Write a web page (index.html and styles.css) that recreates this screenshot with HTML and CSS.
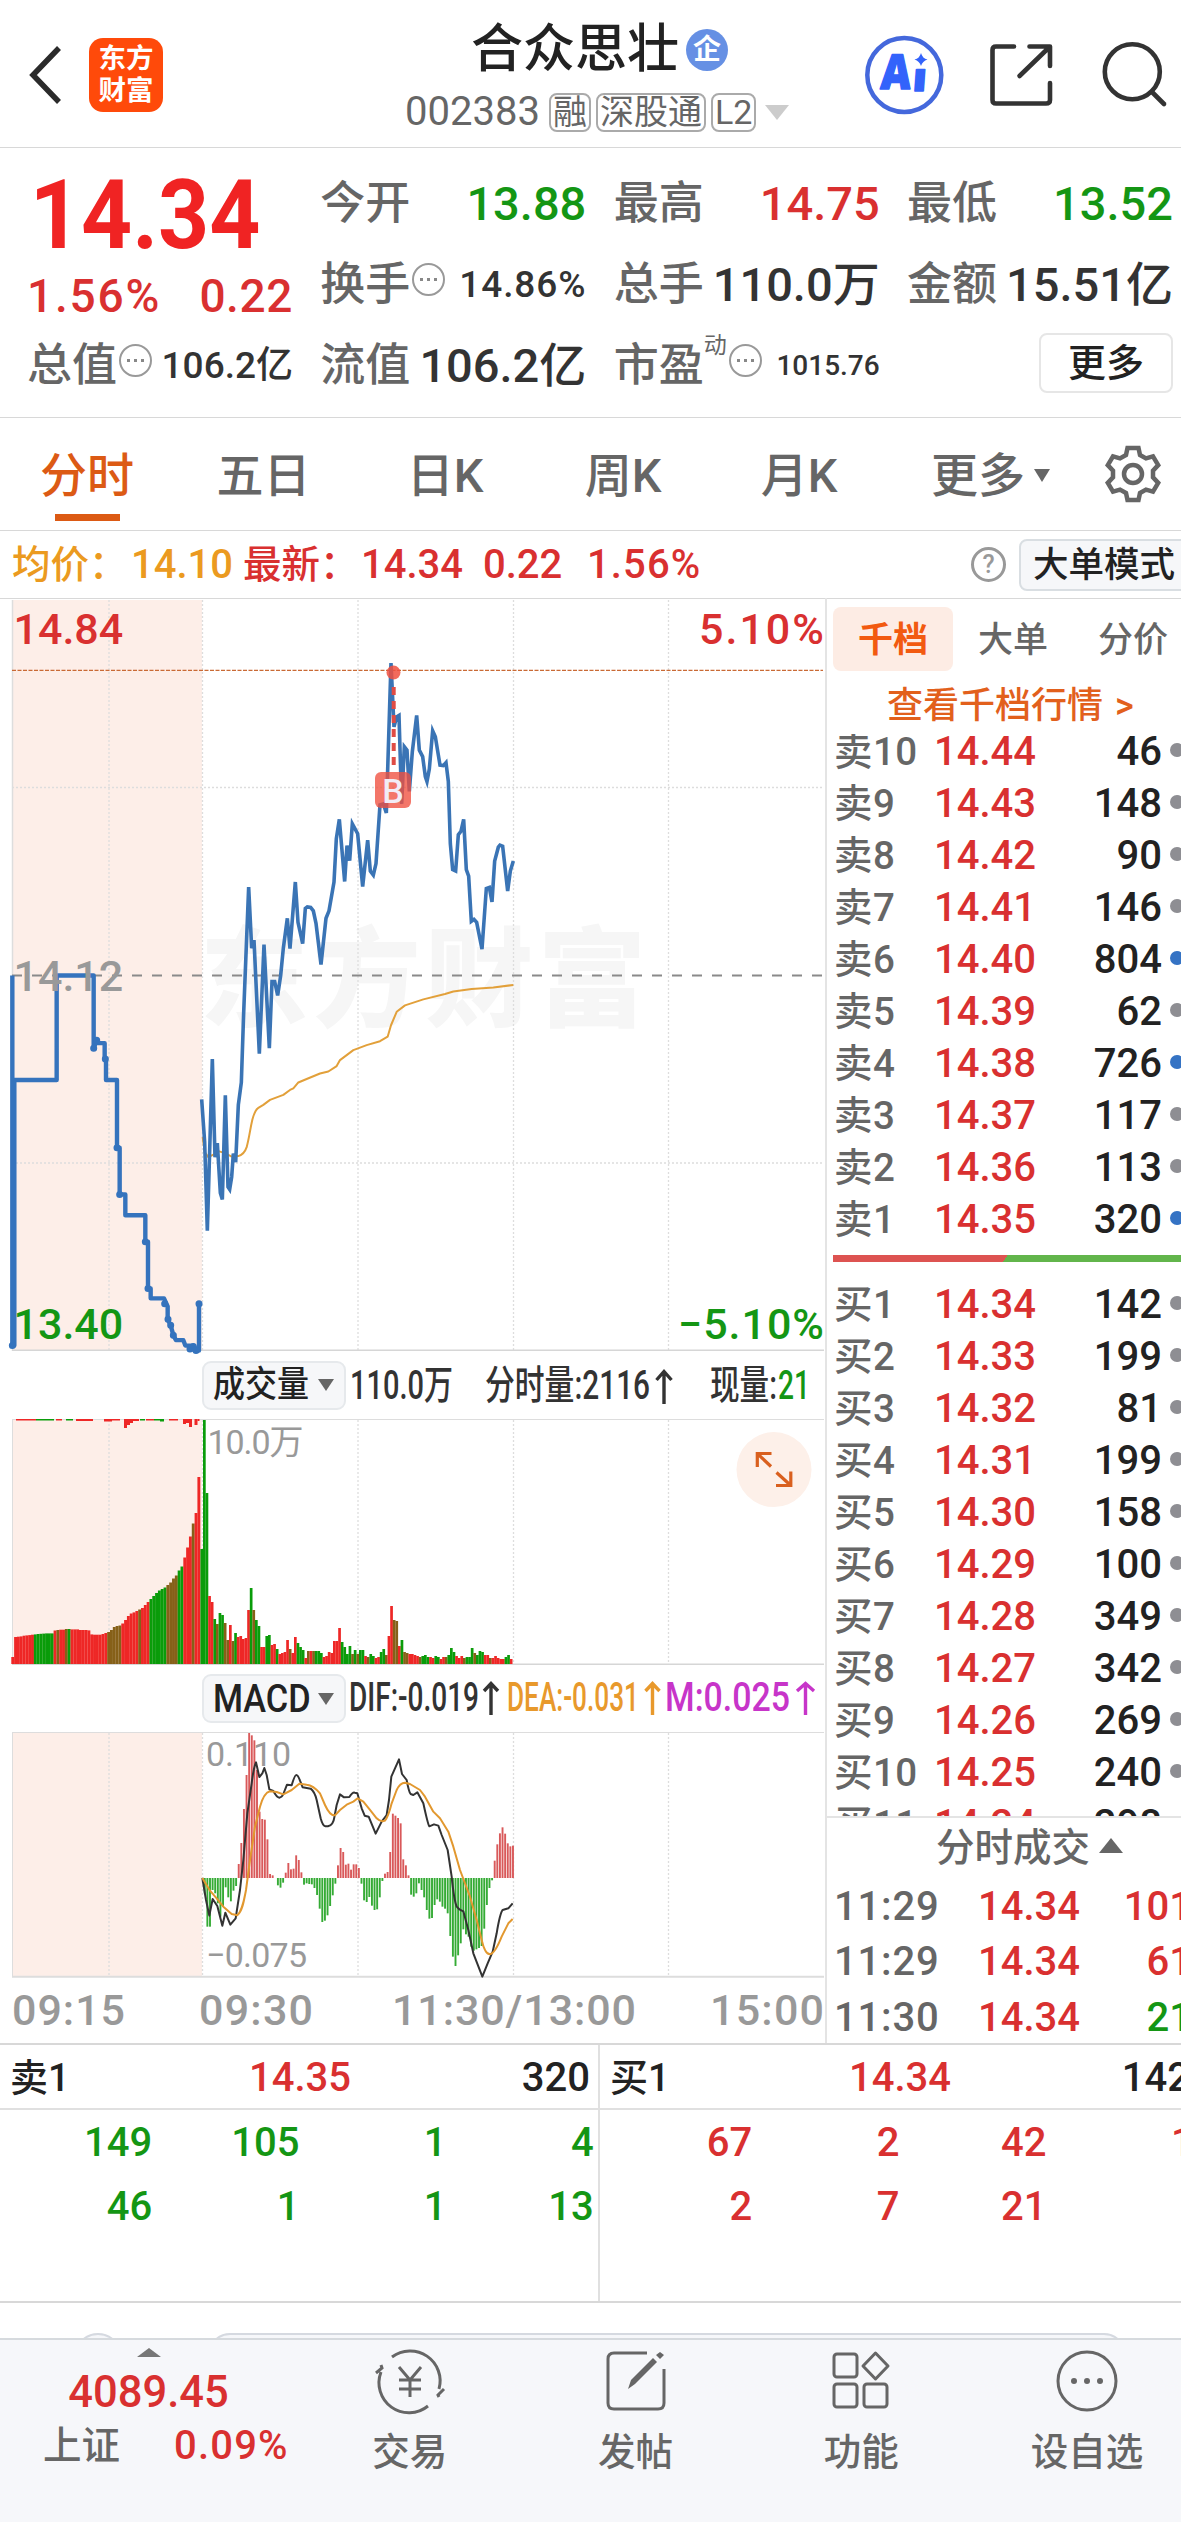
FILE: index.html
```html
<!DOCTYPE html>
<html lang="zh-CN">
<head>
<meta charset="utf-8">
<title>合众思壮 002383</title>
<link rel="stylesheet" href="styles.css">
</head>
<body>
<header class="topbar">
  <svg class="back" viewBox="0 0 34 62" width="34" height="62"><path d="M30 4 L4 31 L30 58"/></svg>
  <div class="logo"><span>东方</span><span>财富</span></div>
  <div class="title">
    <div class="name">合众思壮<span class="corp">企</span></div>
    <div class="code">002383<span class="tag">融</span><span class="tag">深股通</span><span class="tag">L2</span><i class="drop"></i></div>
  </div>
  <svg class="actions" viewBox="860 0 321 147" width="321" height="147">
    <circle cx="904.3" cy="75" r="37" fill="none" stroke="#4468dc" stroke-width="4.5"/>
    <g transform="translate(0 89) skewX(-4)" class="ai">
      <text x="880" y="0" font-size="48" textLength="30" lengthAdjust="spacingAndGlyphs">A</text>
      <text x="912" y="1.500" font-size="39" textLength="14" lengthAdjust="spacingAndGlyphs">ı</text>
    </g>
    <path d="M921 53 q1.5 5.5 6.500 6.500 q-5 1.500 -6.500 6.500 q-1.500 -5 -6.500 -6.500 q5 -1 6.500 -6.500Z" fill="#3363fb"/>
    <g class="ink">
      <path d="M1014 46.500 H996 Q992.500 46.500 992.500 50 V100 Q992.500 103.500 996 103.500 H1046 Q1050 103.500 1050 100 V83"/>
      <path d="M1029.500 46.500 H1050 V66 M1049 47.500 L1019.500 76"/>
      <circle cx="1132.300" cy="71.700" r="27.500"/>
      <path d="M1152 92 L1164 104"/>
    </g>
  </svg>
</header>

<section class="quote">
  <div class="last">
    <div class="big">14.34</div>
    <div class="chg"><span>1.56%</span><span>0.22</span></div>
  </div>
  <div class="cell"><span>今开</span><b class="g">13.88</b></div>
  <div class="cell"><span>最高</span><b class="r">14.75</b></div>
  <div class="cell"><span>最低</span><b class="g">13.52</b></div>
  <div class="cell"><span>换手</span><i class="info"></i><b class="mid wide">14.86%</b></div>
  <div class="cell"><span>总手</span><b>110.0万</b></div>
  <div class="cell"><span>金额</span><b>15.51亿</b></div>
  <div class="cell"><span>总值</span><i class="info"></i><b class="mid">106.2亿</b></div>
  <div class="cell"><span>流值</span><b>106.2亿</b></div>
  <div class="cell"><span>市盈</span><sup>动</sup><i class="info"></i><b class="small">1015.76</b></div>
  <div class="cell end"><span class="morebtn">更多</span></div>
</section>

<nav class="tabs">
  <span class="tab on">分时</span>
  <span class="tab">五日</span>
  <span class="tab">日K</span>
  <span class="tab">周K</span>
  <span class="tab">月K</span>
  <span class="tab more">更多<i></i></span>
  <svg viewBox="-30 -30 60 60" width="60" height="60"><path d="M-5.500-26H5.500L7-19 13-15.600 20-17.600 25.200-8.900 20-3.400V3.400L25.200 8.900 20 17.600 13 15.600 7 19 5.500 26H-5.500L-7 19-13 15.600-20 17.600-25.200 8.900-20 3.400V-3.400L-25.200-8.900-20-17.600-13-15.600-7-19Z"/><circle r="9"/></svg>
</nav>

<div class="summary">
  <span class="avg">均价<em>：</em></span><span class="avg n1">14.10</span>
  <span class="red l2">最新<em>：</em></span><span class="red n2">14.34</span><span class="red n3">0.22</span><span class="red n4">1.56%</span>
  <span class="help">?</span>
  <span class="mode">大单模式</span>
</div>

<main class="board">
  <div class="charts">
    <svg class="panel" viewBox="0 598 825 753" width="825" height="753">
      <rect x="12" y="600" width="190" height="751" fill="#fdeee8"/>
      <g class="wm"><text x="200" y="1018" textLength="446">东方财富</text></g>
      <path class="grid" d="M109 600V1351M202.500 600V1351M358 600V1351M513.500 600V1351M668.500 600V1351M12 787.500H823M12 1163H823"/>
      <path d="M12.500 600V1351" stroke="#ddd" stroke-width="1.500"/>
      <path d="M12 1350.300H824" stroke="#d6d6d6" stroke-width="1.500"/>
      <path d="M12 670.300H823" stroke="#c96a35" stroke-width="1.300" stroke-dasharray="4 1.500"/>
      <path d="M12 975.500H823" stroke="#8a8a8a" stroke-width="2" stroke-dasharray="10 10"/>
      <g transform="translate(0 590) scale(.33333 .49744)">
        <path class="line avgline" d="M608 1100L614 1130 625 1140 640 1135 655 1128 675 1132 695 1139 715 1138C725 1136 735 1130 740 1120C748 1100 750 1085 757 1065C763 1050 770 1043 775 1041L790 1035 810 1025 850 1015 870 1005 880 1002 895 990 920 983 960 972 985 968 1010 957 1020 945 1060 925 1100 915 1140 907 1163 898 1173 875 1190 848 1215 835 1270 823 1335 812 1360 807 1415 802 1480 799 1540 794"/>
        <path class="line pre" d="M37 775V1519H43V985H170V775H281V921L290 905L293 911H314V943L318 948V985H351V1121H359V1215H376V1257H436V1310H444V1404H452V1424H492L503 1440V1466L512 1478L520 1498L528 1508H550L556 1519H580L590 1529H597V1435"/>
        <path class="line pre dots" d="M37 1519h.1M281 921h.1M290 905h.1M316 943h.1M351 1121h.1M359 1215h.1M436 1310h.1M444 1404h.1M494 1435h.1M504 1466h.1M512 1478h.1M520 1498h.1M570 1526h.1M580 1521h.1M588 1529h.1M597 1435h.1"/>
        <path class="line price" d="M605 1024L614 1110 622 1288 637 943 645 1140 652 1112 661 1212 667 1225 676 1016 684 1200 689 1205 695 1180 700 1133 707 1150 715 1035 724 990 731 850 746 597 755 720 762 704 778 932 792 713 808 921 816 787 824 787 833 815 842 775 850 720 862 660 870 721 886 587 894 668 908 711 916 640 922 637 932 638 940 645 948 670 963 753 978 660 987 645 1002 587 1009 500 1018 461 1034 586 1041 514 1049 544 1057 470 1073 490 1088 596 1103 503 1111 565 1120 573 1128 550 1140 432 1150 430 1159 448 1173 147 1182 275 1190 255 1197 252 1205 430 1213 315 1221 322 1228 405 1237 325 1250 252 1258 322 1268 335 1276 375 1281 385 1288 360 1298 283 1306 295 1320 352 1330 353 1338 347 1345 385 1351 510 1358 562 1367 565 1375 492 1383 485 1391 461 1399 562 1406 575 1414 666 1422 662 1430 668 1446 722 1459 600 1468 598 1476 627 1484 545 1495 517 1500 513 1508 515 1523 605 1531 565 1540 545"/>
      </g>
      <circle cx="393.500" cy="672.600" r="7" fill="#f0503f" fill-opacity=".85"/>
      <path d="M393.700 687V766" stroke="#df4c45" stroke-width="4" stroke-dasharray="8 6"/>
      <rect x="375" y="772" width="36" height="36" rx="6" fill="#f0503f" fill-opacity=".78"/>
      <text x="393" y="802.500" text-anchor="middle" class="bmark">B</text>
      <text x="13.500" y="644" class="ax red">14.84</text>
      <text x="13.500" y="991" class="ax gray">14.12</text>
      <text x="13.500" y="1339" class="ax green">13.40</text>
      <text x="824" y="644" text-anchor="end" class="ax red" textLength="125">5.10%</text>
      <text x="824" y="1339" text-anchor="end" class="ax green" textLength="146">−5.10%</text>
    </svg>

    <div class="legend">
      <span class="pick"><span class="sq">成交量</span><i></i></span>
      <svg viewBox="346 1351 479 68" width="479" height="68" class="stats">
        <text x="350" y="1399" textLength="103" lengthAdjust="spacingAndGlyphs">110.0万</text>
        <text x="485" y="1399" textLength="165" lengthAdjust="spacingAndGlyphs">分时量:2116</text>
        <path d="M664 1404V1372M656.500 1380L664 1371.500 671.500 1380"/>
        <text x="710" y="1399" textLength="67" lengthAdjust="spacingAndGlyphs">现量:</text>
        <text x="778" y="1399" textLength="32" lengthAdjust="spacingAndGlyphs" class="green">21</text>
      </svg>
    </div>

    <svg class="panel" viewBox="0 1419 825 246" width="825" height="246">
      <rect x="12" y="1420" width="190" height="244" fill="#fdeee8"/>
      <path class="grid" d="M109 1420V1664M202.500 1420V1664M358 1420V1664M513.500 1420V1664M668.500 1420V1664"/>
      <path d="M12 1419.500H824M12.500 1419V1664" stroke="#ddd"/>
      <path d="M12 1664.200H824" stroke="#d6d6d6" stroke-width="1.500"/>
      <g id="volume"></g>
      <text x="207.500" y="1454" class="scale" textLength="96">10.0万</text>
      <circle cx="774" cy="1469.600" r="37.500" fill="#fdf0e9"/>
      <path d="M757.300 1467V1453.500H771.500M757.300 1453.500L771 1466.500M776 1485.500H790.800V1471.500M790.800 1485.500L776.500 1472.500" fill="none" stroke="#d9601f" stroke-width="3.200"/>
    </svg>

    <div class="legend">
      <span class="pick macd"><span class="sq">MACD</span><i></i></span>
      <svg viewBox="346 1665 479 67" width="479" height="67" class="stats">
        <text x="349" y="1711" textLength="130" lengthAdjust="spacingAndGlyphs">DIF:-0.019</text>
        <path d="M491 1715V1684M484 1691L491 1683.500 498 1691"/>
        <g class="orange"><text x="507" y="1711" textLength="132" lengthAdjust="spacingAndGlyphs">DEA:-0.031</text>
        <path d="M652.500 1715V1684M645.500 1691L652.500 1683.500 659.500 1691"/></g>
        <g class="purple"><text x="665" y="1711" textLength="125" lengthAdjust="spacingAndGlyphs">M:0.025</text>
        <path d="M805.500 1715V1684M797 1691L805.500 1683.500 814 1691"/></g>
      </svg>
    </div>

    <svg class="panel" viewBox="0 1732 825 246" width="825" height="246">
      <rect x="12" y="1733" width="190" height="243" fill="#fdeee8"/>
      <path class="grid" d="M109 1733V1976M202.500 1733V1976M358 1733V1976M513.500 1733V1976M668.500 1733V1976"/>
      <path d="M12 1732.500H824M12.500 1733V1976" stroke="#ddd"/>
      <path d="M12 1976.700H824" stroke="#ddd" stroke-width="2"/>
      <text x="206" y="1766" class="scale" textLength="85">0.110</text>
      <text x="206" y="1967" class="scale" textLength="101">−0.075</text>
      <g id="macd"></g>
      <g transform="translate(190 1660) scale(.33333)">
        <path class="line dif" d="M37 654L48 720 58 767 68 717 82 738 97 797 106 758 121 794 137 775C143 735 147 710 150 690L160 600 172 460 185 370C190 330 194 315 198 307L208 351 217 340 223 324 230 345 238 388 250 393Q260 412 268 413 276 412 280 402L291 374 305 376Q314 345 319 345 324 345 330 362L338 382 362 386Q374 395 380 420L392 475Q398 498 406 499H414Q430 495 433 472L440 435 450 403 462 412 478 411Q488 396 494 398L502 400 515 445 524 467 536 470 557 521 575 485 590 465 597 420 604 350 627 298 636 342 650 360Q657 398 662 402L670 405 682 397 700 430Q714 495 718 499L732 493 745 497 755 525 773 570 785 650Q792 720 800 740L808 748 820 754 835 810 850 880 877 950 893 910 908 875 920 820Q930 760 938 750L955 745 968 730"/>
        <path class="line dea" d="M37 654L60 692 80 715 100 740 125 762 142 766C158 752 162 720 168 690L180 600 195 500 210 440Q222 398 240 394L260 396 280 403 305 390 328 371 350 374Q370 376 390 400L405 435Q420 468 435 466L450 450 470 434 490 425 503 415 520 425 540 450 560 475Q572 487 585 482 595 470 605 430L620 390Q630 368 645 368L660 372 690 390 705 410 730 455 750 475 775 515 790 560 810 630 840 710 860 780 875 840Q885 883 900 883 915 880 935 830L955 790 968 777"/>
      </g>
    </svg>

    <svg class="axis" viewBox="0 1978 825 65" width="825" height="65">
      <text x="12" y="2025" textLength="113">09:15</text>
      <text x="199" y="2025" textLength="114">09:30</text>
      <text x="392" y="2025" textLength="244">11:30/13:00</text>
      <text x="710" y="2025" textLength="114">15:00</text>
    </svg>
  </div>

  <aside class="book">
    <div class="btabs"><span class="on">千档</span><span>大单</span><span>分价</span></div>
    <div class="link">查看千档行情 <em>&gt;</em></div>
    <div class="rows sell">
      <div class="row"><span>卖10</span><b>14.44</b><s>46</s><i></i></div>
      <div class="row"><span>卖9</span><b>14.43</b><s>148</s><i></i></div>
      <div class="row"><span>卖8</span><b>14.42</b><s>90</s><i></i></div>
      <div class="row"><span>卖7</span><b>14.41</b><s>146</s><i></i></div>
      <div class="row"><span>卖6</span><b>14.40</b><s>804</s><i class="blue"></i></div>
      <div class="row"><span>卖5</span><b>14.39</b><s>62</s><i></i></div>
      <div class="row"><span>卖4</span><b>14.38</b><s>726</s><i class="blue"></i></div>
      <div class="row"><span>卖3</span><b>14.37</b><s>117</s><i></i></div>
      <div class="row"><span>卖2</span><b>14.36</b><s>113</s><i></i></div>
      <div class="row"><span>卖1</span><b>14.35</b><s>320</s><i class="blue"></i></div>
    </div>
    <div class="ratio"></div>
    <div class="rows buy">
      <div class="row"><span>买1</span><b>14.34</b><s>142</s><i></i></div>
      <div class="row"><span>买2</span><b>14.33</b><s>199</s><i></i></div>
      <div class="row"><span>买3</span><b>14.32</b><s>81</s><i></i></div>
      <div class="row"><span>买4</span><b>14.31</b><s>199</s><i></i></div>
      <div class="row"><span>买5</span><b>14.30</b><s>158</s><i></i></div>
      <div class="row"><span>买6</span><b>14.29</b><s>100</s><i></i></div>
      <div class="row"><span>买7</span><b>14.28</b><s>349</s><i></i></div>
      <div class="row"><span>买8</span><b>14.27</b><s>342</s><i></i></div>
      <div class="row"><span>买9</span><b>14.26</b><s>269</s><i></i></div>
      <div class="row"><span>买10</span><b>14.25</b><s>240</s><i></i></div>
      <div class="row"><span>买11</span><b>14.24</b><s>298</s><i class="amber"></i></div>
    </div>
    <div class="ticks">
      <div class="thead">分时成交<i></i></div>
      <div class="tick"><span>11:29</span><b>14.34</b><s>101</s></div>
      <div class="tick"><span>11:29</span><b>14.34</b><s>61</s></div>
      <div class="tick"><span>11:30</span><b>14.34</b><s class="g">21</s></div>
    </div>
  </aside>
</main>

<section class="queue">
  <div class="side ask">
    <div class="qh"><span>卖1</span><b>14.35</b><span>320</span></div>
    <div class="ql"><span>149</span><span>105</span><span>1</span><span>4</span><span>46</span><span>1</span><span>1</span><span>13</span></div>
  </div>
  <div class="side bid">
    <div class="qh"><span>买1</span><b>14.34</b><span>142</span></div>
    <div class="ql"><span>67</span><span>2</span><span>42</span><span>1</span><span>2</span><span>7</span><span>21</span></div>
  </div>
</section>

<div class="peek"><i class="dot"></i><i class="pill"></i></div>

<footer class="bottom">
  <div class="index">
    <i class="up"></i>
    <div class="pt">4089.45</div>
    <div class="pc"><span>上证</span><b>0.09%</b></div>
  </div>
  <div class="item">
    <svg viewBox="-36 -34 72 68" width="72" height="68"><path d="M-18-24A30 30 0 0 1 29 8M29 16L28 14 34 8M18 25A30 30 0 0 1-29-9M-29-16L-28-13-34-8M-11-14L0-1 11-14M0-1V16M-11-1H11M-11 8H11"/></svg>
    <span>交易</span>
  </div>
  <div class="item">
    <svg viewBox="-36 -34 72 68" width="72" height="68"><path d="M11-28H-22Q-28-28-28-22V22Q-28 28-22 28H22Q28 28 28 22V-12"/><path d="M-8 8L-5-1 17-23 21-19-1 3ZM20-26L24-29 28-26 24-22Z" class="solid"/></svg>
    <span>发帖</span>
  </div>
  <div class="item">
    <svg viewBox="-36 -34 72 68" width="72" height="68"><rect x="-27" y="-27" width="23" height="23" rx="3"/><rect x="-27" y="3" width="23" height="23" rx="3"/><rect x="3" y="3" width="23" height="23" rx="3"/><path d="M14.500-28L27-15 14.500-2 2-15Z" stroke-linejoin="round"/></svg>
    <span>功能</span>
  </div>
  <div class="item">
    <svg viewBox="-36 -34 72 68" width="72" height="68"><circle r="29"/><g class="solid"><circle cx="-13" r="3"/><circle r="3"/><circle cx="13" r="3"/></g></svg>
    <span>设自选</span>
  </div>
</footer>
<script src="chart.js"></script>
</body>
</html>
```

FILE: styles.css
```css
* { box-sizing: border-box; }
html, body { margin: 0; }
body {
  width: 1181px;
  height: 2522px;
  overflow: hidden;
  background: #fff;
  color: #333;
  font-family: Roboto, "Noto Sans CJK SC", sans-serif;
  font-size: 40px;
}
i, em, s { font-style: normal; text-decoration: none; }
svg { display: block; flex: none; }
.red { color: #d93030; fill: #d93030; }
.green { fill: #149614; }
.gray { fill: #999; }
.r { color: #d93030; }

/* top bar */
.topbar { height: 147px; display: flex; align-items: center; border-bottom: 0; box-shadow: 0 1px #d8d8d8; }
.back { margin: 2px 0 0 29px; fill: none; stroke: #2b2b2b; stroke-width: 5.5; }
.logo {
  width: 74px; height: 74px; margin: 3px 0 0 26px; padding-top: 5px;
  border-radius: 14px; background: #ff4a0a; color: #fff;
  display: flex; flex-direction: column; align-items: center;
  font-weight: 700; font-size: 27.5px; line-height: 32px;
}
.title { margin-left: 242px; width: 455px; height: 147px; }
.name { display: flex; margin: 20px 0 0 66px; height: 60px; line-height: 60px; font-size: 52px; font-weight: 500; color: #222; }
.corp { width: 42px; height: 42px; margin: 9px 0 0 7px; border-radius: 50%; background: #6690e4; color: #fff; font-size: 28px; line-height: 41px; text-align: center; font-weight: 700; }
.code { display: flex; align-items: center; height: 40px; margin: 12px 0 0; line-height: 40px; color: #666; font-size: 40px; gap: 5px; }
.tag { height: 39px; border: 2px solid #aaa; border-radius: 8px; padding: 0 2px; font-size: 34px; line-height: 35px; }
.code .tag:first-child { margin-left: 4px; }
.drop { border: 12px solid transparent; border-top: 15px solid #ccc; border-bottom: 0; margin-left: 4px; }
.actions { margin-left: auto; }
.ink { fill: none; stroke: #333; stroke-width: 4.6; stroke-linecap: round; stroke-linejoin: round; }
.ai { font-family: "Open Sans"; font-weight: 800; fill: #3363fb; stroke: #3363fb; stroke-width: 1.5; stroke-linejoin: round; }

/* quote */
.quote {
  height: 270px; padding: 15px 8px 0 27px;
  display: grid; grid-template-columns: repeat(4, 266px); grid-template-rows: repeat(3, 81px);
  justify-content: space-between; box-shadow: 0 1px #d8d8d8;
}
.last { grid-row: span 2; color: #d93030; }
.big { height: 100px; padding-left: 3px; line-height: 106px; font-size: 97px; font-weight: 700; transform: scaleX(.92); transform-origin: left; color: #f02323; }
.chg { display: flex; justify-content: space-between; height: 70px; line-height: 69px; font-size: 46px; font-weight: 500; }
.chg span:first-child { letter-spacing: 1.8px; }
.chg span:last-child { letter-spacing: .6px; }
.cell { display: flex; align-items: center; line-height: 60px; font-size: 45px; color: #666; white-space: nowrap; padding-top: 2px; }
.cell span { font-weight: 500; }
.cell b { margin-left: auto; font-size: 47px; font-weight: 500; color: #333; }
.cell b.g { color: #149614; }
.cell b.r { color: #d93030; }
.cell b.mid { font-size: 37px; }
.cell b.wide { letter-spacing: .9px; }
.cell b.small { font-size: 28px; }
.cell sup { font-size: 23px; line-height: 24px; align-self: flex-start; margin-top: 8px; }
.cell .info { margin-left: 2px; }
.info {
  width: 33px; height: 33px; border: 2px solid #999; border-radius: 50%; margin-bottom: 10px;
  background: radial-gradient(circle 2px, #888 90%, transparent) -7px 0, radial-gradient(circle 2px, #888 90%, transparent) 0 0, radial-gradient(circle 2px, #888 90%, transparent) 7px 0;
  background-repeat: no-repeat;
}
.cell.end { justify-content: flex-end; }
.cell .morebtn { width: 134px; height: 60px; margin-bottom: 5px; border: 2px solid #e6e6e6; border-radius: 8px; text-align: center; font-size: 38px; line-height: 57px; color: #222; font-weight: 500; }

/* tabs */
.tabs { height: 113px; display: grid; grid-template-columns: 174px 179px 184px 172px 180px 194px 1fr; align-items: center; box-shadow: 0 1px #d8d8d8; color: #666; font-size: 47px; font-weight: 500; }
.tab { text-align: center; line-height: 117px; height: 113px; white-space: nowrap; }
.tab.on { color: #dc5a14; background: linear-gradient(#dc5a14, #dc5a14) 55px 97px / 65px 7px no-repeat; }
.tab.more { text-align: left; padding-left: 42px; }
.tab.more i { display: inline-block; border: 8px solid transparent; border-top: 13px solid #666; border-bottom: 0; margin-left: 9px; vertical-align: 10px; }
.tabs svg { margin-left: 20px; fill: none; stroke: #666; stroke-width: 4.5; }

/* summary */
.summary { height: 68px; display: flex; align-items: center; font-size: 40px; line-height: 60px; padding: 1px 0 0 12px; box-shadow: 0 1px #d8d8d8; white-space: nowrap; font-weight: 500; }
.summary span { flex: none; }
.summary em { display: inline-block; width: 38px; }
.avg { color: #eb9a20; }
.summary .avg, .summary .l2 { font-size: 38.5px; width: 119px; }
.summary .n1 { font-size: 40px; width: 112px; }
.summary .l2 { width: 118px; }
.n2 { width: 122px; }
.n3 { width: 104px; }
.n4 { width: 384px; letter-spacing: 1.1px; }
.help { width: 35px; height: 35px; border: 3px solid #999; border-radius: 50%; font-size: 25px; line-height: 30px; text-align: center; color: #999; }
.mode { width: 170px; height: 52px; margin-left: 13px; padding-left: 12px; border: 2px solid #d9dee2; border-radius: 8px; background: #f6f7f9; font-size: 35.5px; line-height: 49px; color: #222; }

/* charts */
.board { display: grid; grid-template-columns: 825px 1fr; height: 1445px; }
.panel { overflow: visible; }
.grid { fill: none; stroke: #ddd; stroke-width: 1.3; stroke-dasharray: 2 2; }
.line { fill: none; stroke-width: 1.6; vector-effect: non-scaling-stroke; stroke-linejoin: round; }
.avgline { stroke: #e2a03a; stroke-width: 2; }
.price, .pre { stroke: #3a74b5; stroke-width: 3.6; stroke-linejoin: miter; }
.pre { stroke: #3573bd; stroke-width: 4.4; stroke-linejoin: round; }
.dots { stroke-width: 7; stroke-linecap: round; }
.dif { stroke: #333; stroke-width: 2; }
.dea { stroke: #e2982f; stroke-width: 2; }
.wm { font: 900 108px "Noto Sans CJK SC"; fill: #f6f6f6; }
.bmark { font: 500 34px Roboto; fill: #f2ecf6; }
.ax { font-size: 43px; font-weight: 500; }
.scale { font-size: 34px; fill: #999; }
.axis text { font-size: 43px; fill: #999; font-weight: 500; }
.legend { display: flex; align-items: center; padding-left: 202px; height: 68px; }
.pick { width: 144px; height: 49px; border: 2px solid #e6e9ec; border-radius: 9px; background: #f6f7f9; display: flex; align-items: center; color: #222; font-size: 36px; line-height: 44px; padding-left: 9px; overflow: hidden; }
.sq { width: 96px; flex: none; white-space: nowrap; transform: scaleX(.89); transform-origin: left; font-weight: 500; }
.macd .sq { transform: scaleX(.88); font-size: 39px; }
.pick i { border: 8px solid transparent; border-top: 12px solid #666; border-bottom: 0; margin-left: 9px; }
.legend:nth-of-type(2) { height: 67px; }
.stats text { font-size: 40px; fill: #333; font-weight: 500; }
.stats path { fill: none; stroke: #333; stroke-width: 3.4; }
.stats .green { fill: #149614; }
.stats .orange text { fill: #e8992c; }
.stats .orange path { stroke: #e8992c; }
.stats .purple text { fill: #c735c9; }
.stats .purple path { stroke: #c735c9; }

/* order book */
.book { border-left: 2px solid #e4e4e4; padding-left: 6px; overflow: hidden; min-width: 0; height: 1445px; }
.btabs { display: flex; margin-top: 9px; height: 64px; line-height: 67px; font-size: 35px; color: #666; font-weight: 500; }
.btabs span { width: 120px; flex: none; text-align: center; }
.btabs .on { background: #fdece4; border-radius: 8px; color: #f25a10; font-weight: 700; }
.link { height: 52px; margin-top: 9px; padding-left: 54px; font-size: 36px; line-height: 52px; color: #e2601c; font-weight: 500; white-space: nowrap; }
.link em { margin-left: 3px; }
.rows { overflow: hidden; }
.sell { height: 512px; margin-top: 2px; display: flex; flex-direction: column; justify-content: flex-end; margin-bottom: 9px; }
.buy { height: 537px; margin-top: 17px; }
.row { display: flex; flex: none; height: 52.05px; line-height: 52.05px; font-weight: 500; white-space: nowrap; }
.row span { width: 101px; padding-left: 1px; font-size: 38.5px; color: #666; flex: none; letter-spacing: .4px; }
.row b { width: 110px; font-weight: 500; color: #d93030; flex: none; }
.row s { width: 118px; text-align: right; color: #222; flex: none; }
.row i { width: 14px; height: 14px; border-radius: 50%; background: #8e8e93; margin: 17px 0 0 8px; flex: none; }
.row .blue { background: #3573c4; }
.row .amber { background: #d98030; }
.ratio { height: 7px; background: linear-gradient(125deg, #dd5351 49.500%, #62b54b 49.500%); }
.ticks { border-top: 2px solid #e4e4e4; margin-left: -6px; padding-left: 7px; height: 229px; }
.thead { height: 58px; line-height: 61px; padding-left: 102px; font-size: 38.5px; color: #666; display: flex; align-items: center; font-weight: 500; }
.thead i { border: 12px solid transparent; border-bottom: 15px solid #666; border-top: 0; margin-left: 9px; margin-top: -4px; }
.tick { display: flex; height: 55.3px; line-height: 62px; color: #666; white-space: nowrap; }
.tick span { width: 144px; flex: none; letter-spacing: .8px; font-weight: 500; }
.tick b { width: 110px; font-weight: 500; color: #d93030; flex: none; }
.tick s { width: 104px; text-align: right; font-weight: 500; color: #d93030; flex: none; }
.tick .g { color: #149614; }

/* queue */
.queue { height: 260px; border-top: 2px solid #d8d8d8; border-bottom: 2px solid #d8d8d8; display: flex; overflow: hidden; font-weight: 500; line-height: 64px; }
.side { width: 600px; flex: none; border-right: 2px solid #e0e0e0; }
.qh { height: 65px; display: flex; padding: 0 10px 0 10px; border-bottom: 2px solid #e0e0e0; color: #222; }
.qh span { width: 239px; flex: none; font-size: 38px; line-height: 66px; }
.qh b { width: 100px; font-weight: 500; color: #d93030; flex: none; line-height: 66px; }
.qh span:last-child { text-align: right; font-size: 40px; width: 241px; }
.ql { display: grid; grid-template-columns: repeat(4, 147.200px); padding-left: 5px; text-align: right; line-height: 66px; grid-auto-rows: 64px; color: #149614; }
.bid .ql { color: #d93030; }

/* toolbar edge behind the footer */
.peek { height: 35px; overflow: hidden; display: flex; padding: 30px 0 0 74px; background: #fff; }
.peek i { border: 2px solid #d5d9e0; background: #f6f7fa; flex: none; }
.dot { width: 48px; height: 48px; border-radius: 50%; }
.pill { width: 918px; height: 60px; margin-left: 86px; border-radius: 22px; background: linear-gradient(90deg, transparent 825px, #d5d9e0 825px, #d5d9e0 827px, transparent 827px); }

/* footer */
.bottom { height: 185px; border-top: 2px solid #d6dade; background: #f6f7fa; display: flex; color: #666; overflow: hidden; }
.index { width: 297px; flex: none; display: flex; flex-direction: column; align-items: center; color: #d93030; }
.up { border: 12px solid transparent; border-bottom: 9px solid #777; border-top: 0; margin-top: 8px; }
.pt { height: 64px; line-height: 67px; font-size: 43.5px; font-weight: 500; margin-top: 2px; }
.pc { display: flex; width: 100%; height: 50px; line-height: 48px; padding-left: 43px; margin-top: -1px; }
.pc span { font-size: 38.5px; color: #666; font-weight: 500; width: 131px; line-height: 48px; }
.pc b { font-weight: 500; letter-spacing: 1.2px; }
.item { width: 225.7px; flex: none; display: flex; flex-direction: column; align-items: center; font-size: 37.5px; line-height: 48px; font-weight: 500; padding-top: 7px; }
.item svg { fill: none; stroke: #666; stroke-width: 3; }
.item .solid { fill: #666; stroke: none; }
.item span { margin-top: 13px; }
```

FILE: chart.js
```js
// r = up, g = down, m = mixed
const COLORS = { r: '#ee2726', g: '#0a9c0a', m: '#866018' };

function bar(x, y, w, h, fill) {
  return `<rect x="${x.toFixed(2)}" y="${y.toFixed(2)}" width="${w}" height="${h.toFixed(2)}" fill="${fill}"/>`;
}

// call-auction volume: [height, colour]
const auction = `7r 27r 27.3r 27.6r 28.3r 28.6r 28.9r 29.3r 29.6g 30g 30.2g 30.4g 30.6g 30.6g 30.6g 33.500r 34m 34.3r 34.3r 35m 35g 34.6r 34.6r 34.6r 34r 34r 34r 33.6r 29.6r 29.3r 29.3r 29.3r 30r 31r 32m 34m 37m 38m 38.500m 40.5r 44r 48r 50.500r 51.6r 53r 54.500m 56r 59r 62r 65g 68g 71g 73.500g 75g 76.500g 79m 81.500m 85.500m 88.500m 93.500g 97.500g 106.500r 116.500r 127.500r 140.500m 151r 187r`.split(' ');
const session = `115g 244g 171g 68r 62r 45g 40m 51g 49g 41m 24m 39r 23m 31g 27r 28r 25r 26r 54r 76g 54m 44g 38g 17r 17r 28g 29g 19r 20r 15g 10r 11r 12r 24r 15m 11r 27r 21g 17g 14g 6r 13m 13r 13m 13g 13g 11g 7r 8r 12r 11r 23r 23r 36r 22g 17g 10g 18g 10m 14g 10m 14g 14g 8r 7m 10g 8g 6r 7r 12g 15g 9m 28r 58r 44m 43m 18r 24g 12m 11m 10r 10r 9r 8r 7m 8g 9g 7g 7r 6r 8g 7g 5r 7r 7m 9g 16g 12g 8r 6r 8r 6m 7g 7g 16g 11m 9g 13g 12g 9r 9r 6m 6r 8r 6r 5r 5r 7g 9g 5r`.split(' ');

let vol = '';
auction.forEach((s, i) => {
  const h = parseFloat(s);
  vol += bar(11.3 + i * 2.82, 1664 - h, 2.9, h, COLORS[s.slice(-1)]);
});
session.forEach((s, i) => {
  const h = parseFloat(s);
  vol += bar(200.4 + i * 2.6, 1664 - h, 2.7, h, COLORS[s.slice(-1)]);
});
// unmatched volume hanging from the top edge: [x, width, height, colour]
[[16, 20, 1.5, 'r'], [36, 18, 1.5, 'g'], [56, 6, 1.5, 'r'], [66, 7, 1.5, 'g'], [76, 17, 2, 'r'], [104, 8, 2.500, 'r'], [112, 8, 1.5, 'r'],
 [124, 3, 9, 'r'], [127, 3, 6, 'r'], [130, 3, 4, 'r'], [133, 6, 2, 'r'], [140, 5, 1.5, 'g'], [146, 8, 1.500, 'r'], [154, 6, 1.500, 'g'], [160, 4, 2.500, 'g'],
 [169, 9, 1.500, 'r'], [183, 3, 5, 'r'], [186, 3, 4, 'r'], [189, 3, 8, 'r'], [194.500, 3, 6, 'r'], [197.500, 2, 2, 'r']]
  .forEach(([x, w, h, c]) => { vol += bar(x, 1419, w, h, COLORS[c]); });
document.getElementById('volume').innerHTML = vol;

// MACD histogram, thirds of a pixel from the zero line
const hist = [0, -46, -146, -146, -36, -46, -76, -116, -86, -28, -58, -70, -38, -24, 42, 105, 207, 309, 435, 428, 413, 324, 199, 177, 175, 116, 12, 8, 0,
  -22, -29, -14, 16, 45, 26, 28, 68, 54, 17, -20, -16, -18, -19, -30, -51, -92, -132, -128, -112, -84, -52, -17, 38, 90, 78, 40, 43, 25, 41, 41, 30,
  -17, -67, -72, -57, -83, -96, -94, -58, -9, 13, 18, 78, 193, 187, 180, 164, 56, 38, 8, -50, -56, -46, -16, -36, -58, -96, -122, -120, -81, -64, -71,
  -86, -92, -106, -174, -236, -264, -232, -196, -154, -169, -176, -206, -218, -214, -210, -204, -152, -81, -30, -7, 52, 101, 134, 152, 133, 104, 95, 97];
let macd = '';
hist.forEach((v, i) => {
  const h = Math.abs(v) / 3;
  if (h) macd += bar(201.2 + i * 2.612, v > 0 ? 1878 - h : 1878, 1.9, h, v > 0 ? '#d9595a' : '#35ab35');
});
document.getElementById('macd').innerHTML = macd;
```
